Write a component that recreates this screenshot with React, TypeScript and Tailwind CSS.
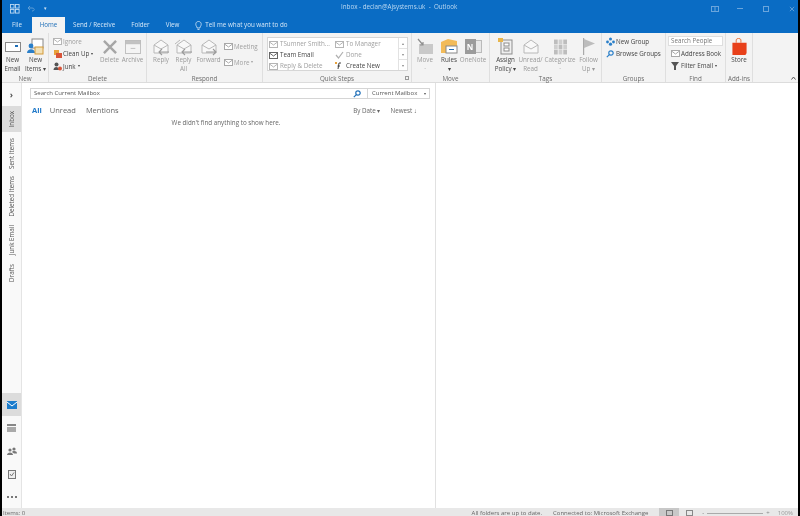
import React from 'react';

const font = '[font-family:"Open_Sans","Noto_Sans",sans-serif]';

const Group: React.FC<{ label: string; width: string; children: React.ReactNode; launcher?: boolean }> = ({
  label,
  width,
  children,
  launcher,
}) => (
  <div className={`${width} relative flex h-full shrink-0 flex-col border-r border-[#dfdfdf]`}>
    <div className="flex h-[41px] items-start">{children}</div>
    <div className="flex h-[8px] items-center justify-center pt-[2px] text-[6.25px] text-[#6a6a6a]">{label}</div>
    {launcher && <div className="absolute bottom-[2px] right-[2px] h-[4px] w-[4px] border border-[#999]" />}
  </div>
);

const Big: React.FC<{ icon: React.ReactNode; lines: string[]; width: string; off?: boolean }> = ({
  icon,
  lines,
  width,
  off,
}) => (
  <div className={`${width} flex shrink-0 flex-col items-center pt-[4px] ${off ? 'text-[#9a9a9a]' : 'text-[#444]'}`}>
    <div className="flex h-[19px] items-center justify-center">{icon}</div>
    {lines.map((l) => (
      <div key={l} className="h-[8.5px] whitespace-nowrap text-[6.25px] leading-[8.5px]">
        {l}
      </div>
    ))}
  </div>
);

const Small: React.FC<{ icon: React.ReactNode; text: string; off?: boolean; caret?: boolean }> = ({
  icon,
  text,
  off,
  caret,
}) => (
  <div className={`flex h-[12.5px] items-center gap-[1px] whitespace-nowrap text-[6.25px] ${off ? 'text-[#a0a0a0]' : 'text-[#444]'}`}>
    <span className="flex w-[10px] justify-center">{icon}</span>
    {text}
    {caret && <span className="ml-[1px] text-[4px]">▾</span>}
  </div>
);

const Env: React.FC<{ arrow?: 'l' | 'r'; double?: boolean }> = ({ arrow, double }) => (
  <svg width="20" height="18" viewBox="0 0 20 18" fill="none" stroke="#b8b8b8" strokeWidth="1">
    <path d="M3 7 L10 2 L17 7 V15 H3 Z" fill="#f8f8f8" />
    <path d="M3 7 L10 11 L17 7" />
    {double && <path d="M1 6 L6 2" />}
    {arrow === 'l' && <path d="M18 14 H8 M11 11 L8 14 L11 17" stroke="#9a9a9a" strokeWidth="1.1" />}
    {arrow === 'r' && <path d="M7 14 H17 M14 11 L17 14 L14 17" stroke="#9a9a9a" strokeWidth="1.1" />}
  </svg>
);

const Tiny: React.FC<{ c?: string }> = ({ c = '#a8a8a8' }) => (
  <svg width="9" height="8" viewBox="0 0 9 8" fill="#fff" stroke={c}>
    <rect x="0.5" y="1.5" width="8" height="6" />
    <path d="M0.5 2 L4.5 5 L8.5 2" fill="none" />
  </svg>
);

const Side: React.FC<{ text: string; h: string; active?: boolean }> = ({ text, h, active }) => (
  <div className={`${h} flex w-full items-center justify-center ${active ? 'bg-[#dcdcdc]' : ''}`}>
    <span className="rotate-180 whitespace-nowrap text-[6.25px] text-[#555] [writing-mode:vertical-rl]">{text}</span>
  </div>
);

const Step: React.FC<{ icon: React.ReactNode; text: string; off?: boolean }> = ({ icon, text, off }) => (
  <div className={`flex h-[11px] items-center gap-[2px] whitespace-nowrap text-[6.25px] ${off ? 'text-[#a0a0a0]' : 'text-[#444]'}`}>
    {icon}
    {text}
  </div>
);

export default function App() {
  return (
    <div className={`${font} flex h-[516px] w-[800px] overflow-hidden bg-white blur-[0.3px]`}>
      <div className="w-[2px] shrink-0 bg-black" />
      <div className="flex min-w-0 flex-1 flex-col">
        {/* title bar */}
        <div className="relative flex h-[17px] shrink-0 items-center bg-[#0a6cc4] text-white">
          <svg className="ml-[8px]" width="10" height="10" viewBox="0 0 11 11" fill="none" stroke="#bcd9f2">
            <rect x="0.5" y="0.5" width="4" height="4" />
            <rect x="6" y="0.5" width="4" height="4" />
            <rect x="0.5" y="6" width="4" height="4" />
            <rect x="6" y="6" width="4" height="4" />
          </svg>
          <svg className="ml-[7px]" width="8" height="7" viewBox="0 0 8 7" fill="none" stroke="#5d9dd6">
            <path d="M1 3 H5 C8 3 8 6 5 6 M3 1 L1 3 L3 5" />
          </svg>
          <span className="ml-[9px] text-[5px] text-[#cfe3f5]">▾</span>
          <div className="absolute left-[339px] top-[2px] whitespace-nowrap text-[6.25px] text-[#bcd9f2]">
            Inbox - declan@Ajsystems.uk&nbsp; - &nbsp;Outlook
          </div>
          <div className="ml-auto mr-[3px] flex items-center gap-[20px]">
            <svg className="mr-[-2px]" width="8" height="6" viewBox="0 0 8 6" fill="none" stroke="#6aa5dc">
              <rect x="0.5" y="0.5" width="7" height="5" />
              <path d="M4 0.5 V5.5" />
            </svg>
            <div className="h-px w-[6px] bg-[#6aa5dc]" />
            <div className="h-[6px] w-[6px] border border-[#6aa5dc]" />
            <svg width="6" height="6" viewBox="0 0 7 7" stroke="#6aa5dc">
              <path d="M1 1 L6 6 M6 1 L1 6" />
            </svg>
          </div>
        </div>

        {/* tabs */}
        <div className="flex h-[16px] shrink-0 items-end bg-[#0a6cc4] text-[6.25px] text-[#d5e7f7]">
          <div className="flex h-full w-[30px] items-center justify-center">File</div>
          <div className="flex h-full w-[33px] items-center justify-center bg-[#f3f3f3] text-[#1f6fb8]">Home</div>
          <div className="ml-[8px] flex h-full items-center gap-[16px]">
            <span className="whitespace-nowrap">Send / Receive</span>
            <span>Folder</span>
            <span>View</span>
            <div className="flex items-center gap-[3px]">
              <svg width="7" height="9" viewBox="0 0 7 9" fill="none" stroke="#d5e7f7" strokeWidth="0.8">
                <path d="M2 6 C0 4 0.5 0.5 3.5 0.5 C6.5 0.5 7 4 5 6 V7 H2 Z M2.5 8.5 H4.5" />
              </svg>
              <span className="whitespace-nowrap">Tell me what you want to do</span>
            </div>
          </div>
        </div>

        {/* ribbon */}
        <div className="relative flex h-[50px] shrink-0 items-stretch border-b border-[#dcdcdc] bg-[#f3f3f3]">
          <Group label="New" width="w-[47px]">
            <Big
              width="w-[21px]"
              lines={['New', 'Email']}
              icon={
                <svg width="16" height="12" viewBox="0 0 16 12" fill="#fff" stroke="#888">
                  <rect x="0.5" y="1.5" width="15" height="9" />
                  <rect x="10" y="4" width="3" height="2" fill="#1f6fb8" stroke="none" />
                </svg>
              }
            />
            <Big
              width="w-[25px]"
              lines={['New', 'Items ▾']}
              icon={
                <svg width="17" height="17" viewBox="0 0 17 17">
                  <rect x="5" y="1" width="11" height="9" fill="#fff" stroke="#888" />
                  <circle cx="4" cy="8" r="2.4" fill="#2a7fc9" />
                  <path d="M0 15 C0 10 8 10 8 15 Z" fill="#2a7fc9" />
                  <rect x="8" y="9" width="8" height="7" fill="#f3e2b8" stroke="#d39a3a" />
                </svg>
              }
            />
          </Group>
          <Group label="Delete" width="w-[98px]">
            <div className="w-[49px] shrink-0 pl-[3px] pt-[2px]">
              <Small off text="Ignore" icon={<Tiny c="#b5b5b5" />} />
              <Small
                text="Clean Up"
                caret
                icon={
                  <svg width="9" height="9" viewBox="0 0 9 9">
                    <rect x="1" y="1" width="5" height="5" fill="#e8a23c" />
                    <rect x="3" y="4" width="6" height="5" fill="#d8553a" />
                  </svg>
                }
              />
              <Small
                text="Junk"
                caret
                icon={
                  <svg width="9" height="9" viewBox="0 0 9 9">
                    <circle cx="3.5" cy="2.5" r="2" fill="#555" />
                    <path d="M0.5 8 C0.5 4 6 4 6 8 Z" fill="#555" />
                    <circle cx="7" cy="6.5" r="2" fill="#d8553a" />
                  </svg>
                }
              />
            </div>
            <Big
              width="w-[23px]"
              off
              lines={['Delete']}
              icon={
                <svg width="16" height="14" viewBox="0 0 16 15" stroke="#a6a6a6" strokeWidth="2.6">
                  <path d="M1.5 1 L14.5 14 M14.5 1 L1.5 14" />
                </svg>
              }
            />
            <Big
              width="w-[23px]"
              off
              lines={['Archive']}
              icon={
                <svg width="16" height="14" viewBox="0 0 17 15" fill="#f4f4f4" stroke="#bdbdbd">
                  <rect x="0.5" y="0.5" width="16" height="14" />
                  <rect x="0.5" y="0.5" width="16" height="3.5" fill="#c2c2c2" />
                  <path d="M6 9 H11" />
                </svg>
              }
            />
          </Group>
          <Group label="Respond" width="w-[116px]">
            <div className="w-[3px] shrink-0" />
            <Big width="w-[22px]" off lines={['Reply']} icon={<Env arrow="l" />} />
            <Big width="w-[23px]" off lines={['Reply', 'All']} icon={<Env arrow="l" double />} />
            <Big width="w-[27px]" off lines={['Forward']} icon={<Env arrow="r" />} />
            <div className="pl-[1px] pt-[7px]">
              <Small off text="Meeting" icon={<Tiny />} />
              <div className="h-[3.5px]" />
              <Small off text="More" caret icon={<Tiny />} />
            </div>
          </Group>
          <Group label="Quick Steps" width="w-[149px]" launcher>
            <div className="ml-[4px] mt-[4px] flex h-[34px] w-[141px] border border-[#d6d6d6] bg-white">
              <div className="w-[66px] pl-[1px] pt-[0.5px]">
                <Step off icon={<Tiny c="#b5b5b5" />} text="TSumner Smith..." />
                <Step icon={<Tiny c="#666" />} text="Team Email" />
                <Step off icon={<Tiny c="#b5b5b5" />} text="Reply & Delete" />
              </div>
              <div className="flex-1 pl-[1px] pt-[0.5px]">
                <Step off icon={<Tiny c="#b5b5b5" />} text="To Manager" />
                <Step
                  off
                  text="Done"
                  icon={
                    <svg width="9" height="8" viewBox="0 0 9 8" fill="none" stroke="#b0b0b0" strokeWidth="1.2">
                      <path d="M1 4 L3.5 7 L8 1" />
                    </svg>
                  }
                />
                <Step
                  text="Create New"
                  icon={
                    <svg width="9" height="8" viewBox="0 0 9 8" fill="none" stroke="#444">
                      <path d="M6 1 H4 L3 7 M2.5 4 H5" />
                      <rect x="0" y="0" width="2" height="2" fill="#e8a23c" stroke="none" />
                    </svg>
                  }
                />
              </div>
              <div className="flex w-[9px] flex-col border-l border-[#e2e2e2] text-center text-[4px] leading-[11px] text-[#888]">
                <div className="h-[11px] border-b border-[#e2e2e2]">▴</div>
                <div className="h-[11px] border-b border-[#e2e2e2]">▾</div>
                <div>▾</div>
              </div>
            </div>
          </Group>
          <Group label="Move" width="w-[78px]">
            <Big
              width="w-[26px]"
              off
              lines={['Move', '·']}
              icon={
                <svg width="17" height="17" viewBox="0 0 17 17">
                  <rect x="2" y="6" width="14" height="10" fill="#c9c9c9" />
                  <path d="M1 1 L6 7 M3 7 H6 V4" fill="none" stroke="#8f8f8f" strokeWidth="1.2" />
                </svg>
              }
            />
            <Big
              width="w-[22px]"
              lines={['Rules', '▾']}
              icon={
                <svg width="17" height="16" viewBox="0 0 17 16">
                  <path d="M0 3 L7 0 L16 2 V14 H0 Z" fill="#f2bb59" />
                  <rect x="5" y="7" width="11" height="7" fill="#fff" stroke="#888" />
                  <rect x="8" y="10" width="5" height="1" fill="#1f6fb8" />
                </svg>
              }
            />
            <Big
              width="w-[26px]"
              off
              lines={['OneNote']}
              icon={
                <span className="flex h-[15px] w-[17px] items-center">
                  <span className="z-10 flex h-[15px] w-[11px] items-center justify-center bg-[#9b9b9b] text-[8px] font-bold text-white">N</span>
                  <span className="ml-[-3px] h-[13px] w-[9px] border border-[#bbb] bg-[#e8e8e8]" />
                </span>
              }
            />
          </Group>
          <Group label="Tags" width="w-[112px]">
            <div className="w-[3px] shrink-0" />
            <Big
              width="w-[25px]"
              lines={['Assign', 'Policy ▾']}
              icon={
                <svg width="16" height="17" viewBox="0 0 16 17">
                  <rect x="3" y="2" width="11" height="14" fill="#f0f0f0" stroke="#8d8d8d" />
                  <rect x="6" y="5" width="5" height="3" fill="#fff" stroke="#8d8d8d" />
                  <rect x="6" y="10" width="5" height="3" fill="#fff" stroke="#8d8d8d" />
                  <rect x="0" y="0" width="5" height="4" fill="#e8b64c" />
                </svg>
              }
            />
            <Big width="w-[25px]" off lines={['Unread/', 'Read']} icon={<Env />} />
            <Big
              width="w-[34px]"
              off
              lines={['Categorize', '·']}
              icon={
                <svg width="13" height="16" viewBox="0 0 14 16" fill="#bdbdbd">
                  <rect x="0" y="0" width="4" height="5" />
                  <rect x="5" y="0" width="4" height="5" fill="#cfcfcf" />
                  <rect x="10" y="0" width="4" height="5" />
                  <rect x="0" y="5.5" width="4" height="5" fill="#cfcfcf" />
                  <rect x="5" y="5.5" width="4" height="5" />
                  <rect x="10" y="5.5" width="4" height="5" fill="#cfcfcf" />
                  <rect x="0" y="11" width="4" height="5" />
                  <rect x="5" y="11" width="4" height="5" fill="#cfcfcf" />
                  <rect x="10" y="11" width="4" height="5" />
                </svg>
              }
            />
            <Big
              width="w-[23px]"
              off
              lines={['Follow', 'Up ▾']}
              icon={
                <svg width="12" height="17" viewBox="0 0 12 17">
                  <rect x="0" y="0" width="1.2" height="17" fill="#aaa" />
                  <path d="M1 1 L12 5.5 L1 10 Z" fill="#bdbdbd" />
                </svg>
              }
            />
          </Group>
          <Group label="Groups" width="w-[64px]">
            <div className="pl-[3px] pt-[2px]">
              <Small
                text="New Group"
                icon={
                  <svg width="9" height="9" viewBox="0 0 9 9" fill="#2a7fc9">
                    <circle cx="4.5" cy="2" r="1.5" />
                    <circle cx="1.5" cy="5" r="1.4" />
                    <circle cx="7.5" cy="5" r="1.4" />
                    <circle cx="4.5" cy="7.2" r="1.6" />
                  </svg>
                }
              />
              <Small
                text="Browse Groups"
                icon={
                  <svg width="8" height="8" viewBox="0 0 8 8" fill="none" stroke="#2a7fc9" strokeWidth="1.2">
                    <circle cx="5" cy="3" r="2.2" />
                    <path d="M3.4 4.6 L0.8 7.2" />
                  </svg>
                }
              />
            </div>
          </Group>
          <Group label="Find" width="w-[60px]">
            <div className="pl-[2px] pt-[3px]">
              <div className="flex h-[10px] w-[55px] items-center border border-[#dedede] bg-white pl-[2px] text-[6.25px] text-[#777]">Search People</div>
              <div className="mt-[1px] pl-[2px]">
                <Small text="Address Book" icon={<Tiny />} />
                <Small
                  text="Filter Email"
                  caret
                  icon={
                    <svg width="8" height="8" viewBox="0 0 8 8" fill="#555">
                      <path d="M0 0 H8 L5 4 V8 H3 V4 Z" />
                    </svg>
                  }
                />
              </div>
            </div>
          </Group>
          <Group label="Add-ins" width="w-[27px]">
            <Big
              width="w-full"
              lines={['Store']}
              icon={
                <svg width="15" height="17" viewBox="0 0 15 18">
                  <path d="M4 5 V2 C4 0 9 0 9 2 V5" fill="none" stroke="#e8703a" />
                  <path d="M0 5 H15 V15 C15 17 14 18 12 18 H0 Z" fill="#e8401a" />
                </svg>
              }
            />
          </Group>
          <svg className="absolute bottom-[2px] right-[2px]" width="5" height="4" viewBox="0 0 5 4" fill="none" stroke="#555">
            <path d="M0.5 3.5 L2.5 1 L4.5 3.5" />
          </svg>
        </div>

        {/* body */}
        <div className="flex min-h-0 flex-1">
          <div className="flex w-[20px] shrink-0 flex-col border-r border-[#e4e4e4] bg-[#f9f9f9]">
            <div className="flex h-[23px] items-center justify-center text-[9px] font-bold text-[#555]">›</div>
            <Side text="Inbox" h="h-[26px]" active />
            <Side text="Sent Items" h="h-[42px]" />
            <Side text="Deleted Items" h="h-[44px]" />
            <Side text="Junk Email" h="h-[44px]" />
            <Side text="Drafts" h="h-[21px]" />
            <div className="mt-auto flex h-[23px] items-center justify-center bg-[#dcdcdc]">
              <svg width="10" height="8" viewBox="0 0 10 8">
                <rect width="10" height="8" fill="#1b7ccc" />
                <path d="M0 1 L5 5 L10 1" fill="none" stroke="#fff" />
              </svg>
            </div>
            <div className="flex h-[23px] items-center justify-center">
              <svg width="9" height="8" viewBox="0 0 9 8" fill="#888">
                <rect width="9" height="2" />
                <rect y="3" width="9" height="5" fill="#aaa" />
              </svg>
            </div>
            <div className="flex h-[23px] items-center justify-center">
              <svg width="10" height="8" viewBox="0 0 10 8" fill="#777">
                <circle cx="3" cy="3" r="1.6" />
                <circle cx="7" cy="2" r="1.6" />
                <path d="M0 8 C0 4.5 6 4.5 6 8 Z" />
                <path d="M5 5 C6 3.5 10 3.5 10 6.5 H7 Z" />
              </svg>
            </div>
            <div className="flex h-[23px] items-center justify-center">
              <svg width="8" height="10" viewBox="0 0 8 10" fill="#eee" stroke="#777">
                <rect x="0.5" y="1.5" width="7" height="8" />
                <path d="M2 5 L3.5 7 L6 3.5" fill="none" />
              </svg>
            </div>
            <div className="flex h-[23px] items-center justify-center gap-[2px]">
              <span className="h-[2px] w-[2px] bg-[#777]" />
              <span className="h-[2px] w-[2px] bg-[#777]" />
              <span className="h-[2px] w-[2px] bg-[#777]" />
            </div>
          </div>

          <div className="w-[414px] shrink-0 border-r border-[#e1e1e1] pt-[5px]">
            <div className="ml-[8px] flex h-[11px] w-[400px] border border-[#d5d5d5] text-[6px] text-[#555]">
              <div className="flex h-full flex-1 items-center justify-between pl-[3px] pr-[6px]">
                Search Current Mailbox
                <svg width="8" height="8" viewBox="0 0 8 8" fill="none" stroke="#1f6fb8" strokeWidth="1.2">
                  <circle cx="5" cy="3" r="2.2" />
                  <path d="M3.4 4.6 L0.8 7.2" />
                </svg>
              </div>
              <div className="flex h-full w-[62px] items-center justify-between border-l border-[#d5d5d5] pl-[4px] pr-[3px]">
                Current Mailbox
                <span className="text-[4px]">▾</span>
              </div>
            </div>
            <div className="ml-[10px] mt-[6px] flex items-center text-[7.5px] text-[#666]">
              <span className="font-bold text-[#1f78c8]">All</span>
              <span className="ml-[8px]">Unread</span>
              <span className="ml-[10px]">Mentions</span>
              <span className="ml-auto text-[6.25px]">By Date ▾</span>
              <span className="ml-[10px] mr-[18px] text-[6.25px]">Newest ↓</span>
            </div>
            <div className="mt-[2px] pr-[5px] text-center text-[6.25px] text-[#666]">We didn't find anything to show here.</div>
          </div>
          <div className="flex-1 bg-white" />
        </div>

        {/* status bar */}
        <div className="flex h-[8px] shrink-0 items-stretch bg-[#e8e8e8] text-[6px] leading-[10px] text-[#666]">
          <span className="ml-[1px]">Items: 0</span>
          <span className="ml-auto">All folders are up to date.</span>
          <span className="ml-[11px]">Connected to: Microsoft Exchange</span>
          <div className="ml-[11px] flex w-[20px] items-end justify-center bg-[#c8c8c8]">
            <div className="h-[6px] w-[7px] border border-[#777]" />
          </div>
          <div className="flex w-[20px] items-end justify-center">
            <div className="h-[6px] w-[7px] border border-[#888]" />
          </div>
          <span className="ml-[3px] text-[#888]">-</span>
          <div className="mx-[3px] mt-[5px] h-px w-[56px] bg-[#aaa]" />
          <span className="text-[#888]">+</span>
          <span className="ml-[8px] mr-[5px] text-[#999]">100%</span>
        </div>
      </div>
      <div className="w-[2px] shrink-0 bg-black" />
    </div>
  );
}
